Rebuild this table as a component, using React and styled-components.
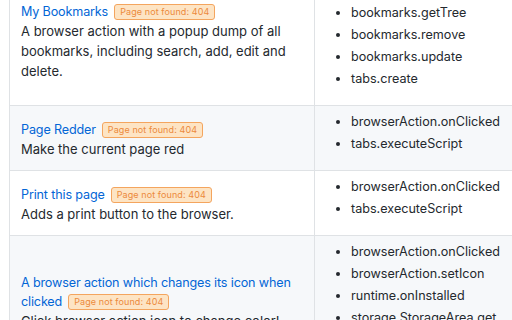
import React from "react";
import styled, { createGlobalStyle } from "styled-components";

const GlobalStyle = createGlobalStyle`
    html, body {
        margin: 0;
        padding: 0;
        background: #ffffff;
        overflow: hidden;
    }
    body {
        font-family: Inter, "Noto Sans", "Liberation Sans", sans-serif;
        font-size: 13px;
        color: #24292e;
    }
`;

const Page = styled.div`
    width: 512px;
    height: 320px;
    overflow: hidden;
    padding-left: 9px;
    box-sizing: border-box;
`;

const Table = styled.table`
    border-collapse: collapse;
    border-spacing: 0;
    width: 640px;
    margin-top: -26px;
    table-layout: fixed;
`;

const Row = styled.tr`
    background: ${props => props.striped ? '#f6f8fa' : '#ffffff'};
    border-top: 1px solid #dfe2e5;
`;

const Cell = styled.td`
    border: 1px solid #dfe2e5;
    padding: 6px 11px 6px;
    vertical-align: middle;
    width: ${props => props.wide ? '282px' : 'auto'};
    line-height: 20px;
`;

const TitleLine = styled.div`
    font-size: 12.6px;
    letter-spacing: -0.15px;
    line-height: 19px;
    padding-top: 2px;
`;

const Title = styled.a`
    color: #0366d6;
    text-decoration: none;
    margin-right: 6px;
`;

const Badge = styled.span`
    display: inline-block;
    font-size: 9px;
    line-height: 14px;
    padding: 0 5px;
    border: 1px solid #f4a55e;
    border-radius: 3px;
    background: #fde4c4;
    color: #ec8a3c;
    vertical-align: 1px;
    letter-spacing: 0.1px;
`;

const Description = styled.div`
    line-height: 20px;
`;

const ApiList = styled.ul`
    margin: 0 0 10px;
    padding-left: 25px;
    font-size: 12.6px;

    & li {
        line-height: 20px;
    }
    & li + li {
        margin-top: 2px;
    }
`;

const samples = [
    {
        title: 'My Bookmarks',
        description: 'A browser action with a popup dump of all bookmarks, including search, add, edit and delete.',
        apis: ['bookmarks.create', 'bookmarks.getTree', 'bookmarks.remove', 'bookmarks.update', 'tabs.create'],
    },
    {
        title: 'Page Redder',
        description: 'Make the current page red',
        apis: ['browserAction.onClicked', 'tabs.executeScript'],
    },
    {
        title: 'Print this page',
        description: 'Adds a print button to the browser.',
        apis: ['browserAction.onClicked', 'tabs.executeScript'],
    },
    {
        title: 'A browser action which changes its icon when clicked',
        description: 'Click browser action icon to change color!',
        apis: ['browserAction.onClicked', 'browserAction.setIcon', 'runtime.onInstalled', 'storage.StorageArea.get', 'storage.StorageArea.set'],
    },
];

const App = () => {
    return (
        <Page>
            <GlobalStyle />
            <Table>
                <tbody>
                    {samples.map((s, i) => (
                        <Row key={s.title} striped={i % 2 === 1}>
                            <Cell wide>
                                <TitleLine>
                                    <Title href="#">{s.title}</Title>
                                    <Badge>Page not found: 404</Badge>
                                </TitleLine>
                                <Description>{s.description}</Description>
                            </Cell>
                            <Cell>
                                <ApiList>
                                    {s.apis.map(a => <li key={a}>{a}</li>)}
                                </ApiList>
                            </Cell>
                        </Row>
                    ))}
                </tbody>
            </Table>
        </Page>
    );
};

export default App;
